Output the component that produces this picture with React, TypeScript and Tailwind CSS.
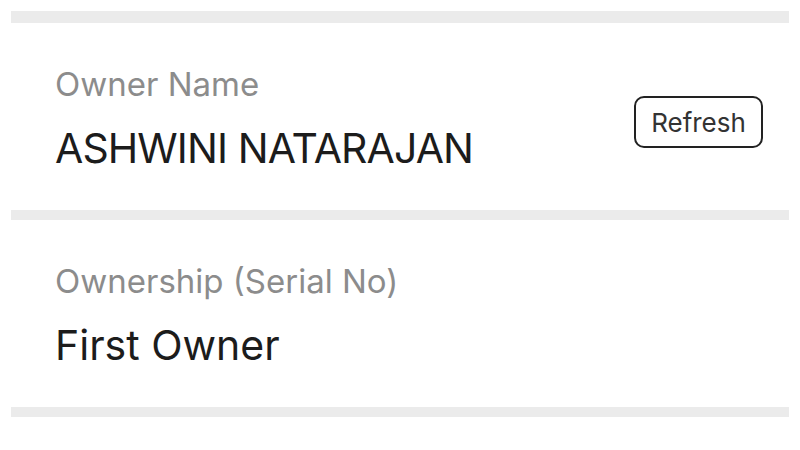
const ROWS = [
  { label: "Owner Name", value: "ASHWINI NATARAJAN", valueClass: "tracking-[-0.9px]", action: "Refresh" },
  { label: "Ownership (Serial No)", value: "First Owner", valueClass: "" },
];

export default function App() {
  return (
    <div
      className="h-[450px] w-[800px] overflow-hidden bg-white px-[11px] pt-[11px]"
      style={{ fontFamily: "Inter, 'Noto Sans', sans-serif" }}
    >
      <div className="h-[12px] bg-[#ebebeb]" />
      {ROWS.map((row) => (
        <div key={row.label}>
          <div className="flex h-[187px] items-start justify-between pl-[44px] pr-[26px] pt-[41px]">
            <div className="flex flex-col">
              <span className="text-[33px] leading-[40px] text-[#8c8c8c]">{row.label}</span>
              <span className={`mt-[20px] text-[41px] leading-[48px] text-[#1c1c1c] ${row.valueClass}`}>
                {row.value}
              </span>
            </div>
            {row.action && (
              <button className="mt-[32px] h-[52px] w-[129px] rounded-[10px] border-2 border-[#222] text-[26px] text-[#333]">
                {row.action}
              </button>
            )}
          </div>
          <div className="h-[10px] bg-[#ebebeb]" />
        </div>
      ))}
    </div>
  );
}
